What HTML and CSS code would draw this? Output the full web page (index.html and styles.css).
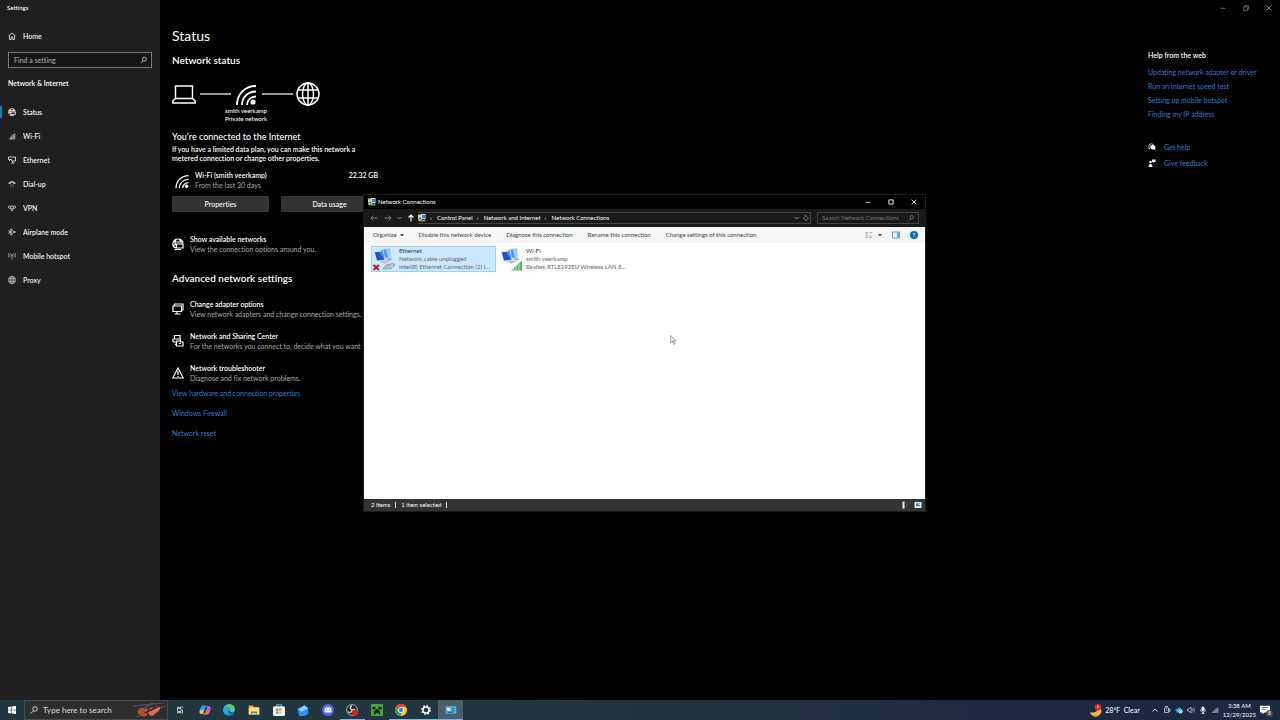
FILE: index.html
```html
<!DOCTYPE html>
<html lang="en">
<head>
    <meta charset="UTF-8">
    <meta name="viewport" content="width=device-width, initial-scale=1.0">
    <title>Settings</title>
    <link rel="stylesheet" href="styles.css">
</head>
<body>
    <!-- shared icons -->
    <svg class="sprite" aria-hidden="true">
        <symbol id="i-wifi" viewBox="0 0 24 24">
            <circle cx="19" cy="20" r="2.6" fill="currentColor"/>
            <path d="M3 23C3 12 11 4 22 4M8 23C8 15 14 9.500 22 9.500M13 23C13 18 17 14.500 22 14.500" fill="none" stroke="currentColor" stroke-width="1.8"/>
        </symbol>
        <symbol id="i-globe" viewBox="0 0 24 24">
            <g fill="none" stroke="currentColor" stroke-width="1.5"><circle cx="12" cy="12" r="11"/><ellipse cx="12" cy="12" rx="5.500" ry="11"/><path d="M2 8h20M2 16h20M12 1v22"/></g>
        </symbol>
        <symbol id="i-netglobe" viewBox="0 0 24 24">
            <g fill="none" stroke="currentColor" stroke-width="2.4"><path d="M8 20C4 19 1 15 2 10C3 5 7 2 12 2s9 3 10 8M2 8h19M8 3C6 7 6 12 7 15M15 2c1 2 2 4 2 7M2 14h6"/><path d="M9 12h13v8H9zM5 23h13M20 11v-2"/></g>
        </symbol>
        <symbol id="i-monitor" viewBox="0 0 24 24">
            <g fill="none" stroke="currentColor" stroke-width="2.4"><path d="M5 6V2h17v12h-3"/><path d="M2 6h17v11H2zM10 17v4M5 22h12"/></g>
        </symbol>
        <symbol id="i-search" viewBox="0 0 16 16">
            <g fill="none" stroke="currentColor" stroke-width="1.5"><circle cx="10" cy="6" r="4.500"/><path d="M7 9.500L1.500 15"/></g>
        </symbol>
        <symbol id="i-netcon" viewBox="0 0 16 16">
            <path d="M0 1h8v8H0z" fill="#e6d06b"/><path d="M6 0h9v10H6z" fill="#dfeaf2"/><path d="M8 2h6v6H8z" fill="#2e7bd0"/><path d="M1 6h7v8H1z" fill="#f3f6f8"/><path d="M2 7h5v4H2z" fill="#3c6fa8"/><path d="M7 11h8v4H3v-2z" fill="#66a55b"/>
        </symbol>
        <symbol id="i-pcs" viewBox="0 0 48 48">
            <path d="M16 5l22-3 3 23-21 3z" fill="#c9d3dc"/><path d="M19 7l17-2 2 18-17 2z" fill="#4d9bea"/><path d="M28 6l8-1 2 18-4 1z" fill="#9ed0fa"/>
            <path d="M1 10l22-2 4 23-21 3z" fill="#dfe7ee"/><path d="M3 12l18-2 4 19-17 2z" fill="#1c52cf"/><path d="M12 11l9-1 4 19z" fill="#4a90f0"/>
            <path d="M13 33l14-3 12 2-14 6z" fill="#b9c4cd"/><path d="M27 27l9-2 8 3-8 3z" fill="#9aa8b4"/>
        </symbol>
        <symbol id="i-min" viewBox="0 0 10 10"><path d="M1 5.500h8" stroke="currentColor" stroke-width="1.2"/></symbol>
        <symbol id="i-close" viewBox="0 0 10 10"><path d="M1 1l8 8M9 1L1 9" stroke="currentColor" stroke-width="1.3"/></symbol>
        <symbol id="i-down" viewBox="0 0 10 10"><path d="M1 3l4 4 4-4" fill="none" stroke="currentColor" stroke-width="1.6"/></symbol>
    </svg>

    <div class="settings">
        <aside class="sidebar">
            <div class="app-title">Settings</div>
            <a href="#home" class="home">
                <svg viewBox="0 0 16 16"><path d="M1 8l7-6 7 6M3 7v8h3.500v-5h3v5H13V7" fill="none" stroke="currentColor" stroke-width="1.5"/></svg>
                Home
            </a>
            <label class="find">
                <input type="text" placeholder="Find a setting" aria-label="Find a setting">
                <svg><use href="#i-search"/></svg>
            </label>
            <div class="group">Network &amp; Internet</div>
            <nav>
                <a href="#status" class="active"><svg><use href="#i-netglobe"/></svg>Status</a>
                <a href="#wifi"><svg viewBox="0 0 16 16"><path d="M1 15L15 2v13z" fill="#777"/><path d="M4 15c0-6 4-10 10-11M7 15c0-4 3-7 7-7M10 15c0-2 2-3 4-3" fill="none" stroke="#ddd"/></svg>Wi-Fi</a>
                <a href="#ethernet"><svg viewBox="0 0 16 16"><path d="M4 2h11v8H7M7 10V7H1V2h3M10 10v3M6 14h7M3 7v3" fill="none" stroke="currentColor" stroke-width="1.5"/></svg>Ethernet</a>
                <a href="#dialup"><svg viewBox="0 0 16 16"><path d="M1 6c3-5 11-5 14 0v2h-4V6H5v2H1z" fill="#bbb"/><path d="M5 9h6M4 11h8M4 13h8" stroke="#888" stroke-dasharray="2 1"/></svg>Dial-up</a>
                <a href="#vpn"><svg viewBox="0 0 16 16"><path d="M1 4h4v4H1zM11 4h4v4h-4zM6 9h4v4H6zM5 5h6M4 8l3 3M12 8l-3 3M6 4h4" fill="none" stroke="#bbb" stroke-width="1.5"/></svg>VPN</a>
                <a href="#airplane"><svg viewBox="0 0 16 16"><path d="M2 5l2 2h3L5 2h2l4 5h2c3 0 3 2 0 2h-2l-4 5H5l2-5H4l-2 2 1-3z" fill="none" stroke="currentColor" stroke-width="1.3"/></svg>Airplane mode</a>
                <a href="#hotspot"><svg viewBox="0 0 16 16"><path d="M8 7v8M5 3c-2 2-2 5 0 7M11 3c2 2 2 5 0 7M2 2C0 5 0 8 2 11M14 2c2 3 2 6 0 9" fill="none" stroke="#bbb" stroke-width="1.300"/><circle cx="8" cy="6" r="1.500" fill="#ddd"/></svg>Mobile hotspot</a>
                <a href="#proxy"><svg><use href="#i-globe"/></svg>Proxy</a>
            </nav>
        </aside>

        <main>
            <h1>Status</h1>
            <h2>Network status</h2>
            <figure class="diagram">
                <div class="nodes">
                    <svg viewBox="0 0 24 24"><path d="M3.500 4h17v12.500h-17zM3.500 16.500L.8 19v2h22.400v-2l-2.700-2.500" fill="none" stroke="#fff" stroke-width="1.400"/></svg>
                    <span class="wire"></span>
                    <svg><use href="#i-wifi"/></svg>
                    <span class="wire"></span>
                    <svg><use href="#i-globe"/></svg>
                </div>
                <figcaption>smith veerkamp<br>Private network</figcaption>
            </figure>
            <h3>You’re connected to the Internet</h3>
            <p class="plan">If you have a limited data plan, you can make this network a metered connection or change other properties.</p>
            <div class="usage">
                <svg><use href="#i-wifi"/></svg>
                <div><b>Wi-Fi (smith veerkamp)</b><p>From the last 30 days</p></div>
                <b class="amount">22.32 GB</b>
            </div>
            <div class="buttons">
                <button>Properties</button>
                <button>Data usage</button>
            </div>
            <div class="option">
                <svg><use href="#i-netglobe"/></svg>
                <div><b>Show available networks</b><p>View the connection options around you.</p></div>
            </div>
            <h2 class="advanced">Advanced network settings</h2>
            <div class="options">
                <div class="option">
                    <svg><use href="#i-monitor"/></svg>
                    <div><b>Change adapter options</b><p>View network adapters and change connection settings.</p></div>
                </div>
                <div class="option">
                    <svg viewBox="0 0 24 24"><g fill="none" stroke="currentColor" stroke-width="2.400"><path d="M5 8V1h11v7M2 8h15v6M9 14H2V8M9 12h6l2 2h5v8H9zM14 17h4M6 18l3 2"/></g></svg>
                    <div><b>Network and Sharing Center</b><p>For the networks you connect to, decide what you want to share.</p></div>
                </div>
                <div class="option">
                    <svg viewBox="0 0 24 24"><path d="M12 2L1.500 22h21zM12 8v8M12 18v2" fill="none" stroke="currentColor" stroke-width="2.400"/></svg>
                    <div><b>Network troubleshooter</b><p>Diagnose and fix network problems.</p></div>
                </div>
            </div>
            <div class="links">
                <a href="#hardware">View hardware and connection properties</a>
                <a href="#firewall">Windows Firewall</a>
                <a href="#reset">Network reset</a>
            </div>
        </main>

        <aside class="help">
            <div class="controls">
                <button aria-label="Minimize"><svg><use href="#i-min"/></svg></button>
                <button aria-label="Restore"><svg viewBox="0 0 10 10"><path d="M1 3h6v6H1zM3 3V1h6v6H7" fill="none" stroke="currentColor"/></svg></button>
                <button aria-label="Close"><svg><use href="#i-close"/></svg></button>
            </div>
            <h4>Help from the web</h4>
            <div class="web">
                <a href="#adapter">Updating network adapter or driver</a>
                <a href="#speed">Run an internet speed test</a>
                <a href="#mobile">Setting up mobile hotspot</a>
                <a href="#ip">Finding my IP address</a>
            </div>
            <div class="support">
                <a href="#help"><svg viewBox="0 0 16 16"><path d="M2 12V4c0-3 9-3 9 0v2M2 12l3-3" fill="none" stroke="#fff" stroke-width="1.500"/><path d="M5 5c3-2 9-1 10 3 0 3-1 4-1 4l1 3-3-2c-5 1-8-3-7-8z" fill="#fff"/><path d="M6 4c2 0 3 2 2 3" fill="none" stroke="#000"/></svg>Get help</a>
                <a href="#feedback"><svg viewBox="0 0 16 16"><circle cx="5" cy="6" r="2.500" fill="#fff"/><path d="M1 16c0-8 8-8 8 0zM8 1h7v5h-3l-2 2V6H8z" fill="#fff"/></svg>Give feedback</a>
            </div>
        </aside>
    </div>

    <section class="window">
        <header class="titlebar">
            <svg><use href="#i-netcon"/></svg>
            <span>Network Connections</span>
            <div class="controls">
                <button aria-label="Minimize"><svg><use href="#i-min"/></svg></button>
                <button aria-label="Maximize"><svg viewBox="0 0 10 10"><path d="M1.500 1.500h7v7h-7z" fill="none" stroke="currentColor" stroke-width="1.500"/></svg></button>
                <button aria-label="Close"><svg><use href="#i-close"/></svg></button>
            </div>
        </header>
        <div class="address-row">
            <div class="arrows">
                <svg viewBox="0 0 16 16"><path d="M15 8H2M7 3L2 8l5 5" fill="none" stroke="#999" stroke-width="1.600"/></svg>
                <svg viewBox="0 0 16 16"><path d="M1 8h13M9 3l5 5-5 5" fill="none" stroke="#999" stroke-width="1.600"/></svg>
                <svg class="tiny"><use href="#i-down"/></svg>
                <svg viewBox="0 0 16 16"><path d="M8 15V2M3 7l5-5 5 5" fill="none" stroke="#fff" stroke-width="2.200"/></svg>
            </div>
            <div class="address">
                <svg><use href="#i-netcon"/></svg>
                <i>›</i><span>Control Panel</span>
                <i>›</i><span>Network and Internet</span>
                <i>›</i><span>Network Connections</span>
                <svg class="drop"><use href="#i-down"/></svg>
                <svg class="reload" viewBox="0 0 16 16"><path d="M11 4a5.500 5.500 0 1 1-6 0M4 1h4v5" fill="none" stroke="currentColor" stroke-width="1.600"/></svg>
            </div>
            <label class="search">
                <input type="text" placeholder="Search Network Connections" aria-label="Search Network Connections">
                <svg><use href="#i-search"/></svg>
            </label>
        </div>
        <div class="toolbar">
            <button class="organize">Organize <svg viewBox="0 0 10 10"><path d="M0 3h10L5 8z"/></svg></button>
            <button>Disable this network device</button>
            <button>Diagnose this connection</button>
            <button>Rename this connection</button>
            <button>Change settings of this connection</button>
            <div class="views">
                <button aria-label="View"><svg viewBox="0 0 16 16"><path d="M1 3h5M9 3h6M1 6h5M1 10h5M9 10h4M1 13h5M9 13h5" stroke="#8b959c" stroke-width="1.500"/></svg></button>
                <button aria-label="More views"><svg class="caret" viewBox="0 0 10 10"><path d="M0 3h10L5 8z"/></svg></button>
                <button aria-label="Preview pane" class="preview"><svg viewBox="0 0 16 16"><path d="M1 2h14v12H1z" fill="#e9f3fb" stroke="#4a7fae" stroke-width="1.500"/><path d="M10 3h4v10h-4z" fill="#6aaee0"/></svg></button>
                <button aria-label="Help"><span class="question">?</span></button>
            </div>
        </div>
        <div class="files">
            <div class="file selected">
                <svg viewBox="0 0 48 48"><use href="#i-pcs" width="48" height="42"/><path d="M3 36l11 10M14 36L3 46" stroke="#c4161c" stroke-width="4"/><path d="M22 44l6-8 14-3 4 3-8 7z" fill="#c3ccd2" stroke="#7d8b94" stroke-width="1.500"/><path d="M28 38l2 4M33 36l2 5" stroke="#66747d"/></svg>
                <div><b>Ethernet</b><p>Network cable unplugged</p><p>Intel(R) Ethernet Connection (2) I...</p></div>
            </div>
            <div class="file">
                <svg viewBox="0 0 48 48"><use href="#i-pcs" width="48" height="42"/><path d="M24 47L46 27v20z" fill="#5bb56c"/><path d="M29 42v5M34 38v9M40 33v14" stroke="#d9f0dc" stroke-width="1.500"/></svg>
                <div><b>Wi-Fi</b><p>smith veerkamp</p><p>Realtek RTL8192EU Wireless LAN 8...</p></div>
            </div>
        </div>
        <footer class="statusbar">
            <span>2 items</span><span class="bar"></span><span>1 item selected</span><span class="bar"></span>
            <svg class="mode" viewBox="0 0 16 16"><path d="M3 1h4v14H3z" fill="#eee"/><path d="M11 2v12" stroke="#666" stroke-width="2" stroke-dasharray="2 2"/></svg>
            <svg viewBox="0 0 16 16"><path d="M1 2h14v12H1z" fill="#dcebf7"/><path d="M4 5h8v5H4z" fill="#2f6ea8"/><path d="M6 6h6v2z" fill="#fff"/></svg>
        </footer>
    </section>

    <svg class="cursor" viewBox="0 0 12 18"><path d="M1 1v13l3-3 2.500 6 2-1-2.500-5.500H11z" fill="#fff" stroke="#555"/></svg>

    <footer class="taskbar">
        <button class="start" aria-label="Start"><svg viewBox="0 0 16 16"><path d="M0 2l7-1v6.500H0zM8 1l8-1v7.500H8zM0 8.500h7V15l-7-1zM8 8.500h8V16l-8-1z" fill="#fff"/></svg></button>
        <label class="taskbar-search">
            <svg><use href="#i-search"/></svg>
            <input type="text" placeholder="Type here to search" aria-label="Type here to search">
            <svg class="violin" viewBox="0 0 36 18"><path d="M2 5l31-3M5 16L34 5M6 11L22 2" stroke="#5f5068" stroke-width="1.200"/><path d="M8 8c2-2 4-1 5 0 3-2 6 1 4 4-1 4-5 5-7 2-3 0-4-3-2-6z" fill="#b04f3b"/><path d="M18 9c1-3 3-3 5-2 2-3 6-3 6 0 0 4-4 4-5 6-3 4-8 1-6-4z" fill="#dd7050"/><path d="M14 12l18-9" stroke="#40222b" stroke-width="1.500"/></svg>
        </label>
        <nav class="apps">
            <button aria-label="Task View"><svg viewBox="0 0 16 16"><path d="M3 5h7v6H3zM3 1v2h7V1M3 15v-2h7v2M13 1v3M13 7v8" fill="none" stroke="#eee" stroke-width="1.500"/></svg></button>
            <button aria-label="Copilot"><svg viewBox="0 0 16 16"><path d="M5 2h5L7 13H3C0 13 0 10 1 8c1-3 2-6 4-6z" fill="#2c9fe8"/><path d="M2 8h5l-2 5H3C0 13 1 10 2 8z" fill="#f3c63c"/><path d="M9 3h4c3 0 3 3 2 5-1 3-2 6-4 6H6z" fill="#c55be0"/><path d="M8 8h7c-1 3-2 6-4 6H6z" fill="#f06a60"/><path d="M10 4L7 12" stroke="#22363f" stroke-width="2"/></svg></button>
            <button aria-label="Edge"><svg viewBox="0 0 16 16"><circle cx="8" cy="8" r="8" fill="#1685d8"/><path d="M1 6C3-2 16-1 16 7c0 4-6 5-7 2 2-4-4-6-8-3z" fill="#53d27d"/><path d="M1 6c5-4 9-2 8 2-3 0-4 3-1 6C2 15-1 10 1 6z" fill="#25a9dc"/><path d="M9 9c1 3 4 3 6 2-2 3-7 2-7-1z" fill="#22363f"/></svg></button>
            <button aria-label="File Explorer"><svg viewBox="0 0 16 16"><path d="M1 2h5l2 2h7v10H1z" fill="#e8b53d"/><path d="M1 5h14v9H1z" fill="#ffdc75"/><path d="M4 10h8v4h-2v-2H6v2H4z" fill="#3d91d1"/></svg></button>
            <button aria-label="Store"><svg viewBox="0 0 16 16"><path d="M5 4V1h6v3" fill="none" stroke="#55b9ec" stroke-width="1.500"/><rect y="3" width="16" height="13" rx="2" fill="#f2f2f2"/><path d="M4 6h3v3H4z" fill="#f05133"/><path d="M8 6h3v3H8z" fill="#7fba3a"/><path d="M4 10h3v3H4z" fill="#28a0e8"/><path d="M8 10h3v3H8z" fill="#fbbb22"/></svg></button>
            <button aria-label="Mail"><svg viewBox="0 0 16 16"><path d="M1 6l9-5 5 4v8l-5 3H3z" fill="#1b62bd"/><path d="M1 7l9-5 5 4-9 5z" fill="#8bd0fa"/><path d="M1 7l6 4 8-4v6l-5 3H3z" fill="#3192e8"/></svg></button>
            <button aria-label="Discord"><svg viewBox="0 0 16 16"><circle cx="8" cy="8" r="8" fill="#5865f2"/><path d="M4 5c2-1 6-1 8 0l1 5-3 2-1-1H7l-1 1-3-2z" fill="#fff"/><circle cx="6" cy="8" r="1" fill="#5865f2"/><circle cx="10" cy="8" r="1" fill="#5865f2"/></svg></button>
            <button aria-label="OBS" class="open"><svg viewBox="0 0 16 16"><circle cx="8" cy="8" r="7.200" fill="#222" stroke="#ddd"/><path d="M8 8C5 7 5 3 8 3M8 8c3-2 6 1 4 3M8 8c0 4-4 4-5 2" fill="none" stroke="#ddd" stroke-width="1.800"/><circle cx="12" cy="11.500" r="4" fill="#e11b1b"/></svg></button>
            <button aria-label="Minecraft"><svg viewBox="0 0 16 16"><path d="M0 0h16v16H0z" fill="#4aa52f"/><path d="M2 4h4v3H2zM10 4h4v3h-4zM6 7h4v2h2v5h-2v-2H6v2H4V9h2z" fill="#102010"/></svg></button>
            <button aria-label="Chrome" class="open"><svg viewBox="0 0 16 16"><circle cx="8" cy="8" r="8" fill="#f9c62e"/><path d="M1 4a8 8 0 0 1 14 0H8L5 9z" fill="#e5432f"/><path d="M1 4l4 6 4 2-2 4C1 15-2 9 1 4z" fill="#2da44e"/><circle cx="8" cy="8" r="3.800" fill="#fff"/><circle cx="8" cy="8" r="2.900" fill="#3b7ded"/></svg></button>
            <button aria-label="Settings" class="open"><svg viewBox="0 0 16 16"><circle cx="8" cy="8" r="4" fill="none" stroke="#fff" stroke-width="2"/><circle cx="8" cy="8" r="5.600" fill="none" stroke="#fff" stroke-width="2" stroke-dasharray="2.200 2.200"/></svg></button>
            <button aria-label="Network Connections" class="open current"><svg viewBox="0 0 16 16"><path d="M1 3h14v10H1z" fill="#56b7df"/><path d="M3 5h4v4H3z" fill="#e6f6fc"/><path d="M9 6h4M9 9h4M3 11h8" stroke="#14618a" stroke-width="1.500"/></svg></button>
        </nav>
        <div class="tray">
            <button class="weather">
                <svg viewBox="0 0 16 16"><path d="M11 2c2 6-4 10-10 8 2 6 12 7 14 0 1-3-1-7-4-8z" fill="#f8b83c"/><path d="M3 13c3 2 9 2 11-2-1 5-8 7-11 2z" fill="#e87a31"/><circle cx="11" cy="4" r="4" fill="#d62a25"/><path d="M11 2v3" stroke="#fff"/></svg>
                28°F&nbsp; Clear
            </button>
            <svg viewBox="0 0 16 16"><path d="M3 11l5-5 5 5" fill="none" stroke="#fff" stroke-width="1.500"/></svg>
            <svg viewBox="0 0 16 16"><path d="M3 4h8v9H3zM11 7l3-1v5l-3-1M4 1h6M7 7v3" fill="none" stroke="#ddd" stroke-width="1.500"/></svg>
            <svg viewBox="0 0 16 16"><path d="M3 11c-5-2-1-7 2-5 2-5 8-3 8 1 4 1 3 6 0 6H3z" fill="#2e9cf0"/><circle cx="11" cy="11" r="4" fill="#eaf5ff"/><path d="M9 11a2 2 0 1 1 2 2" fill="none" stroke="#1767b0" stroke-width="1.200"/></svg>
            <svg viewBox="0 0 16 16"><path d="M1 6h3l4-4v12l-4-4H1zM10 5c1 2 1 4 0 6M13 3c2 3 2 7 0 10" fill="none" stroke="#ddd" stroke-width="1.300"/></svg>
            <svg viewBox="0 0 16 16"><rect x="5" y="1" width="6" height="9" rx="3" fill="#fff"/><path d="M3 7c0 7 10 7 10 0M8 12v3M5 15h6" fill="none" stroke="#fff" stroke-width="1.500"/></svg>
            <svg viewBox="0 0 16 16"><path d="M1 14L15 2v12z" fill="#667084"/><path d="M4 14c0-5 4-8 10-9M8 14c0-3 3-5 6-5" fill="none" stroke="#c4cad6"/></svg>
            <time>3:38 AM<br>12/29/2025</time>
            <button class="notes" aria-label="8 notifications">
                <svg viewBox="0 0 16 16"><path d="M0 1h16v11h-9l-3 3v-3H0z" fill="#fff"/><path d="M3 4h10M3 7h7" stroke="#1d2c48"/></svg>
                <span>8</span>
            </button>
        </div>
    </footer>
</body>
</html>
```

FILE: styles.css
```css
* {
    margin: 0;
    padding: 0;
    box-sizing: border-box;
}

body {
    background-color: #000;
    color: #fff;
    font: 7px/10px Lato, 'Open Sans', sans-serif;
    font-variant-ligatures: none;
    min-height: 100vh;
    display: flex;
    flex-direction: column;
    overflow: hidden;
}

a {
    color: inherit;
    text-decoration: none;
}

button, input {
    font: inherit;
    font-variant-ligatures: none;
    color: inherit;
    background: none;
    border: none;
    outline: none;
}

b {
    font-weight: 600;
    display: block;
}

svg {
    display: block;
    flex: none;
    width: 8px;
    height: 8px;
}

.sprite {
    position: absolute;
    width: 0;
    height: 0;
}

/* Settings */
.settings {
    flex: 1;
    display: flex;
}

.sidebar {
    width: 160px;
    background-color: #1f1f1f;
    font-weight: 500;
}

.app-title {
    padding: 3px 7px;
    font-size: 6px;
}

.home {
    display: flex;
    align-items: center;
    gap: 7px;
    padding: 0 8px;
    height: 10px;
    margin-top: 15px;
}

.find {
    display: flex;
    align-items: center;
    margin: 11px 8px 0;
    height: 16px;
    padding: 0 4px 0 5px;
    border: 1px solid #777;
    background-color: #161616;
}

.find input {
    flex: 1;
    min-width: 0;
}

.find svg {
    width: 7px;
}

input::placeholder {
    color: #aaa;
    opacity: 1;
}

.group {
    font-weight: 600;
    margin: 10px 8px 12px;
}

.sidebar nav a {
    display: flex;
    align-items: center;
    gap: 7px;
    height: 24px;
    padding: 0 8px;
    position: relative;
}

.sidebar nav .active::before {
    content: "";
    position: absolute;
    left: 0;
    top: 6px;
    width: 2px;
    height: 12px;
    background-color: #1a7fc9;
}

main {
    flex: 1;
    padding: 26px 12px 0;
}

h1 {
    font-size: 14px;
    line-height: 20px;
    font-weight: 400;
}

h2 {
    font-size: 10px;
    line-height: 14px;
    font-weight: 600;
    margin-top: 7px;
}

.diagram {
    width: 148px;
    margin-top: 14px;
}

.nodes {
    display: flex;
    align-items: center;
    justify-content: space-between;
}

.nodes svg {
    width: 24px;
    height: 26px;
}

.wire {
    width: 31px;
    height: 2px;
    background-color: #999;
}

figcaption {
    font-size: 6px;
    line-height: 8px;
    font-weight: 500;
    text-align: center;
}

h3 {
    font-size: 9px;
    line-height: 12px;
    font-weight: 500;
    margin-top: 8px;
}

.plan {
    width: 200px;
    line-height: 9px;
    font-weight: 600;
    margin-top: 2px;
}

.usage {
    display: flex;
    width: 206px;
    margin-top: 7px;
}

.usage svg {
    width: 16px;
    height: 16px;
    margin: 3px 5px 0 2px;
}

.usage p, .option p {
    color: #aaa;
}

.amount {
    margin-left: auto;
}

.buttons {
    display: flex;
    gap: 12px;
    margin-top: 6px;
}

.buttons button {
    width: 97px;
    height: 16px;
    background-color: #333;
    font-weight: 500;
}

.option {
    display: flex;
    align-items: center;
    gap: 6px;
}

.option svg {
    width: 12px;
    height: 12px;
}

.buttons + .option {
    margin-top: 22px;
}

.advanced {
    margin-top: 17px;
}

.options {
    display: flex;
    flex-direction: column;
    gap: 12px;
    margin-top: 14px;
}

.links {
    display: flex;
    flex-direction: column;
    align-items: flex-start;
    gap: 10px;
    margin-top: 5px;
    color: #2a7fce;
}

.controls {
    display: flex;
    justify-content: flex-end;
}

.controls button {
    width: 23px;
    height: 16px;
    display: flex;
    align-items: center;
    justify-content: center;
}

.controls svg {
    width: 6px;
    height: 6px;
}

.help {
    width: 132px;
    color: #2a7fce;
}

.help .controls {
    color: #999;
}

h4 {
    font-size: 7px;
    font-weight: 600;
    color: #fff;
    margin-top: 34px;
}

.web {
    line-height: 14px;
    margin-top: 5px;
}

.web a {
    display: block;
}

.support {
    margin-top: 18px;
}

.support a {
    display: flex;
    align-items: center;
    gap: 8px;
    height: 16px;
}

/* Network Connections window */
.window {
    position: absolute;
    left: 363px;
    top: 194px;
    width: 563px;
    height: 318px;
    display: flex;
    flex-direction: column;
    background-color: #fff;
    border: 1px solid #1c1c1c;
    font-size: 6px;
    line-height: 8px;
}

.titlebar {
    display: flex;
    align-items: center;
    gap: 2px;
    height: 14px;
    padding-left: 4px;
    background-color: #000;
}

.titlebar .controls {
    margin-left: auto;
}

.address-row {
    display: flex;
    align-items: center;
    gap: 6px;
    height: 18px;
    padding: 0 6px;
    background-color: #191919;
}

.arrows {
    display: flex;
    align-items: center;
    gap: 5px;
    color: #999;
}

.arrows svg:first-child {
    margin-right: 1px;
}

.arrows .tiny {
    width: 5px;
}

.address {
    flex: 1;
    display: flex;
    align-items: center;
    gap: 4px;
    height: 12px;
    border: 1px solid #444;
    border-left: none;
}

.arrows + .address {
    margin-left: -3px;
}

.address i {
    font-style: normal;
    width: 3px;
}

.address .drop {
    margin-left: auto;
    width: 5px;
    color: #aaa;
}

.address .reload {
    width: 6px;
    height: 6px;
    margin-right: 1px;
    color: #aaa;
}

.search {
    display: flex;
    align-items: center;
    width: 102px;
    height: 12px;
    padding: 0 4px;
    border: 1px solid #444;
}

.search input {
    flex: 1;
    min-width: 0;
}

.search input::placeholder {
    color: #777;
}

.search svg {
    width: 6px;
    height: 6px;
    color: #aaa;
}

.toolbar {
    display: flex;
    align-items: center;
    gap: 15px;
    height: 16px;
    padding: 0 7px 0 9px;
    background-color: #f5f6f7;
    color: #444;
}

.organize {
    display: flex;
    align-items: center;
    gap: 3px;
}

.organize svg, .caret {
    width: 4px;
    height: 4px;
    fill: #222;
}

.views {
    display: flex;
    align-items: center;
    gap: 5px;
    margin-left: auto;
}

.preview {
    margin: 0 5px;
}

.question {
    display: block;
    width: 8px;
    border-radius: 50%;
    background-color: #1467b3;
    color: #fff;
    font-weight: 700;
}

.files {
    flex: 1;
    display: flex;
    align-items: flex-start;
    gap: 2px;
    padding: 3px 7px;
}

.file {
    display: flex;
    align-items: center;
    gap: 3px;
    width: 125px;
    height: 26px;
    border: 1px solid transparent;
    color: #666;
}

.file.selected {
    background-color: #cce8ff;
    border-color: #99d1ff;
}

.file svg {
    width: 24px;
    height: 24px;
}

.file b {
    font-weight: 400;
    color: #333;
}

.file p {
    white-space: nowrap;
}

.statusbar {
    display: flex;
    align-items: center;
    gap: 5px;
    height: 12px;
    padding: 0 3px 0 7px;
    background-color: #333;
}

.bar {
    width: 1px;
    height: 6px;
    background-color: #ddd;
}

.statusbar .mode {
    margin-left: auto;
}

.cursor {
    position: absolute;
    left: 670px;
    top: 335px;
    width: 7px;
    height: 10px;
}

/* Taskbar */
.taskbar {
    display: flex;
    align-items: stretch;
    height: 20px;
    background: linear-gradient(90deg, #22363f 0%, #22363f 40%, #1b2842 85%, #1b2842 100%);
}

.taskbar button {
    display: flex;
    align-items: center;
    justify-content: center;
}

.start {
    width: 24px;
}

.taskbar-search {
    display: flex;
    align-items: center;
    gap: 5px;
    width: 144px;
    padding-left: 5px;
    background-color: #2e2e2e;
    border: 1px solid #454b4d;
    font-size: 8px;
}

.taskbar-search input {
    flex: 1;
    min-width: 0;
}

.taskbar-search input::placeholder {
    color: #ddd;
}

.violin {
    width: 36px;
    height: 18px;
}

.apps {
    display: flex;
    width: 295px;
}

.apps button {
    flex: 1;
    border-bottom: 1px solid transparent;
}

.apps svg {
    width: 12px;
    height: 12px;
}

.apps button:first-child svg {
    width: 8px;
    height: 8px;
}

.apps .open {
    border-color: #76b9ed;
}

.apps .current {
    background-color: #4a5f69;
}

.tray {
    display: flex;
    align-items: center;
    gap: 4px;
    margin-left: auto;
    padding-right: 10px;
}

.weather {
    gap: 3px;
    margin-right: 7px;
}

.weather svg {
    width: 13px;
    height: 13px;
}

.tray time {
    font-size: 6px;
    line-height: 9px;
    text-align: center;
}

.notes {
    position: relative;
}

.notes svg {
    width: 10px;
    height: 10px;
}

.notes span {
    position: absolute;
    right: -3px;
    bottom: -2px;
    width: 7px;
    border-radius: 50%;
    background-color: #444;
    font-size: 5px;
    line-height: 7px;
}
```
